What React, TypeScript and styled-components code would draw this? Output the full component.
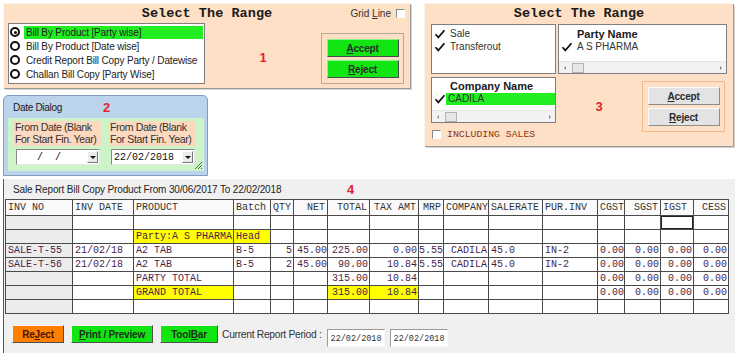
import React from 'react';
import styled, { createGlobalStyle } from 'styled-components';

const GlobalStyle = createGlobalStyle`
  body {
    margin: 0;
    background: #fff;
    font-family: "Liberation Sans", Arial, sans-serif;
  }
`;

const mono = `"Liberation Mono", "Courier New", monospace`;

// ---------- shared bits ----------

const Page = styled.div`
  width: 740px;
  height: 353px;
  overflow: hidden;
  background: #fff;
`;

const Top = styled.div`
  display: flex;
  box-sizing: border-box;
  height: 176px;
  padding: 3px 0 0 3px;
`;

const LeftCol = styled.div`
  display: flex;
  flex-direction: column;
  gap: 7px;
  width: 407px;
`;

const PeachPanel = styled.div<{ $w: number; $h: number }>`
  box-sizing: border-box;
  width: ${p => p.$w}px;
  height: ${p => p.$h}px;
  background: #fde0c6;
  border-top: 1px solid #fff3e8;
  border-left: 1px solid #fff3e8;
  box-shadow: 1px 1px 0 #9a9a9a, 2px 2px 0 #d4d4d4;
  display: flex;
  flex-direction: column;
`;

const TitleRow = styled.div`
  display: grid;
  grid-template-columns: 1fr auto 1fr;
  align-items: center;
  height: 19px;
`;

const Title = styled.div`
  grid-column: 2;
  font-family: ${mono};
  font-weight: bold;
  font-size: 13.5px;
  color: #1a1a1a;
  letter-spacing: 0.05px;
`;

const GridLine = styled.label`
  grid-column: 3;
  justify-self: end;
  display: flex;
  align-items: center;
  gap: 5px;
  margin-right: 5px;
  font-size: 10px;
  color: #333;
`;

const CheckBox = styled.span`
  display: inline-block;
  box-sizing: border-box;
  width: 9px;
  height: 9px;
  background: #fff;
  border: 1px solid;
  border-color: #8a8a8a #fff #fff #8a8a8a;
`;

const Marker = styled.span`
  font-weight: bold;
  font-size: 13px;
  color: #e3232b;
`;

const Box = styled.div<{ $w: number; $h: number }>`
  box-sizing: border-box;
  width: ${p => p.$w}px;
  height: ${p => p.$h}px;
  background: #fff;
  border: 1px solid #7e7e7e;
  font-size: 10px;
  color: #222;
  display: flex;
  flex-direction: column;
  overflow: hidden;
`;

// ---------- panel 1 ----------

const Body1 = styled.div`
  display: flex;
  align-items: flex-end;
  padding-left: 4px;
`;

const RadioRow = styled.div`
  display: flex;
  align-items: center;
  height: 14px;
  padding-left: 1px;
`;

const Radio = styled.span<{ $on?: boolean }>`
  box-sizing: border-box;
  flex: none;
  width: 10px;
  height: 10px;
  border-radius: 50%;
  border: 2px solid #111;
  background: #fff;
  position: relative;
  &::after {
    content: '';
    display: ${p => (p.$on ? 'block' : 'none')};
    position: absolute;
    inset: 1.5px;
    border-radius: 50%;
    background: #111;
  }
`;

const RadioText = styled.span<{ $on?: boolean }>`
  flex: 1;
  margin-left: 4px;
  padding-left: 2px;
  height: 13px;
  line-height: 13px;
  letter-spacing: -0.15px;
  white-space: nowrap;
  background: ${p => (p.$on ? '#22ee22' : 'transparent')};
  margin-right: 1px;
`;

const Center = styled.div<{ $top: number }>`
  flex: 1;
  align-self: stretch;
  display: flex;
  justify-content: center;
  padding-top: ${p => p.$top}px;
`;

const BtnGroup = styled.div<{ $w: number; $h: number; $line: string }>`
  box-sizing: border-box;
  width: ${p => p.$w}px;
  height: ${p => p.$h}px;
  border: 1px solid ${p => p.$line};
  display: flex;
  flex-direction: column;
  align-items: center;
  justify-content: center;
  gap: 3px;
`;

const PanelBtn = styled.button<{ $kind: 'green' | 'gray' }>`
  box-sizing: border-box;
  width: 72px;
  height: 18px;
  padding: 0;
  font-family: "Liberation Sans", Arial, sans-serif;
  font-weight: bold;
  font-size: 10px;
  letter-spacing: -0.2px;
  color: #2a2a2a;
  background: ${p => (p.$kind === 'green' ? '#12e612' : '#e3e3e3')};
  border: 1px solid;
  border-color: ${p =>
    p.$kind === 'green' ? '#8af08a #4a4a4a #4a4a4a #8af08a' : '#fafafa #8c8c8c #8c8c8c #fafafa'};
`;

// ---------- panel 2 ----------

const Dlg = styled.div`
  box-sizing: border-box;
  width: 205px;
  height: 81px;
  background: #bcd3ec;
  border: 1px solid #7f9dc3;
  border-radius: 5px 5px 0 0;
  padding: 0 3px 4px 4px;
  display: flex;
  flex-direction: column;
`;

const DlgTitle = styled.div`
  display: flex;
  align-items: center;
  height: 22px;
  padding-left: 5px;
  font-size: 10px;
  letter-spacing: -0.3px;
  color: #1a1a1a;
`;

const DlgClient = styled.div`
  flex: 1;
  background: #cdf3c9;
  display: flex;
  gap: 8px;
  padding: 3px 0 0 6px;
  position: relative;
`;

const DateField = styled.div`
  display: flex;
  flex-direction: column;
  gap: 3px;
`;

const DateLabel = styled.div`
  width: 86px;
  height: 25px;
  background: #fdd9bf;
  font-size: 10.6px;
  line-height: 12px;
  letter-spacing: -0.4px;
  white-space: nowrap;
  color: #333;
  padding-left: 1px;
`;

const DateInput = styled.div`
  box-sizing: border-box;
  display: flex;
  align-items: center;
  width: 84px;
  height: 16px;
  margin-left: 2px;
  background: #fff;
  border: 1px solid;
  border-color: #8a8a8a #e8e8e8 #e8e8e8 #8a8a8a;
  font-family: ${mono};
  font-size: 10px;
  color: #111;
`;

const DateText = styled.span`
  flex: 1;
  padding-left: 2px;
  white-space: pre;
`;

const DropBtn = styled.span`
  flex: none;
  width: 11px;
  height: 12px;
  margin-right: 1px;
  background: #eaeaea;
  border: 1px solid;
  border-color: #fff #777 #777 #fff;
  box-sizing: border-box;
  display: flex;
  align-items: center;
  justify-content: center;
  &::after {
    content: '';
    border-left: 3px solid transparent;
    border-right: 3px solid transparent;
    border-top: 3px solid #111;
  }
`;

const Grip = styled.svg`
  position: absolute;
  right: 1px;
  bottom: 1px;
`;

// ---------- panel 3 ----------

const Body3 = styled.div`
  display: flex;
  flex-direction: column;
  padding-left: 6px;
`;

const ListRow = styled.div`
  display: flex;
  gap: 2px;
  margin-top: 1px;
`;

const Item = styled.div<{ $bold?: boolean }>`
  display: flex;
  align-items: center;
  height: 13px;
  padding-left: 2px;
  font-size: ${p => (p.$bold ? '11px' : '10px')};
  font-weight: ${p => (p.$bold ? 'bold' : 'normal')};
  color: ${p => (p.$bold ? '#1a1a1a' : '#333')};
  white-space: nowrap;
`;

const Check = styled.svg`
  flex: none;
  width: 12px;
`;

const ItemText = styled.span<{ $hl?: boolean; $gap: number }>`
  flex: 1;
  margin-left: ${p => p.$gap}px;
  padding-left: 2px;
  line-height: 12px;
  background: ${p => (p.$hl ? '#22ee22' : 'transparent')};
`;

const Spacer = styled.span<{ $w: number }>`
  flex: none;
  width: ${p => p.$w}px;
`;

const Scroll = styled.div`
  margin-top: auto;
  height: 11px;
  display: flex;
  align-items: center;
  background: #f2f2f2;
  border-top: 1px solid #e4e4e4;
`;

const Arrow = styled.span<{ $dir: 'l' | 'r' }>`
  width: 11px;
  display: flex;
  justify-content: center;
  &::after {
    content: '';
    border-top: 2px solid transparent;
    border-bottom: 2px solid transparent;
    ${p => (p.$dir === 'l' ? 'border-right: 2px solid #888;' : 'border-left: 2px solid #888;')}
  }
`;

const Thumb = styled.span`
  box-sizing: border-box;
  width: 12px;
  height: 10px;
  margin-left: 2px;
  margin-right: auto;
  background: #e6e6e6;
  border: 1px solid #b4b4b4;
`;

const Bottom3 = styled.div`
  display: flex;
  align-items: flex-start;
  margin-top: 3px;
`;

const Col3 = styled.div`
  display: flex;
  flex-direction: column;
`;

const IncRow = styled.label`
  display: flex;
  align-items: center;
  gap: 6px;
  margin-top: 6px;
  padding-left: 1px;
  font-family: ${mono};
  font-size: 9.8px;
  color: #8b3514;
`;

const Grp3 = styled.div`
  margin-top: 4px;
  margin-right: 8px;
`;

// ---------- section 4 ----------

const Report = styled.div`
  box-sizing: border-box;
  margin: 3px 0 0 3px;
  width: 732px;
  height: 174px;
  background: #f0f0f0;
  border-left: 1px solid #5a5a5a;
`;

const Caption = styled.div`
  display: flex;
  align-items: center;
  height: 20px;
  padding-left: 9px;
  font-size: 10px;
  letter-spacing: -0.15px;
  color: #1e1e1e;
`;

const CaptionText = styled.span`
  width: 334px;
  padding-top: 1px;
`;

const Grid = styled.table`
  margin-left: 1px;
  border-collapse: collapse;
  table-layout: fixed;
  width: 723px;
  font-family: ${mono};
  font-size: 10px;
`;

const Th = styled.th<{ $a: string }>`
  height: 15px;
  padding: 0 2px;
  border: 1px solid #4a4a4a;
  background: #fafafa;
  font-weight: normal;
  color: #333;
  text-align: ${p => p.$a};
  white-space: nowrap;
  overflow: hidden;
`;

const Td = styled.td<{ $a: string; $hl?: boolean; $fixed?: boolean; $focus?: boolean; $tight?: boolean }>`
  height: 13px;
  padding: ${p => (p.$tight ? '0' : '0 1px 0 2px')};
  border: 1px solid #4a4a4a;
  background: ${p => (p.$hl ? '#ffff00' : p.$fixed ? '#ececec' : '#fff')};
  color: #4a1f4a;
  text-align: ${p => p.$a};
  white-space: nowrap;
  overflow: hidden;
  line-height: 13px;
  box-shadow: ${p => (p.$focus ? 'inset 0 0 0 1px #222' : 'none')};
`;

const BottomBar = styled.div`
  display: flex;
  align-items: flex-start;
  margin-top: 11px;
  padding-left: 8px;
`;

const BarBtn = styled.button<{ $w: number; $orange?: boolean }>`
  box-sizing: border-box;
  width: ${p => p.$w}px;
  height: 18px;
  margin-right: 7px;
  padding: 0;
  font-family: "Liberation Sans", Arial, sans-serif;
  font-weight: bold;
  font-size: 10px;
  letter-spacing: -0.2px;
  color: ${p => (p.$orange ? '#4a1400' : '#1c2e1c')};
  background: ${p => (p.$orange ? '#ff8000' : '#12e612')};
  border: 1px solid;
  border-color: #f4f4f4 #505050 #505050 #f4f4f4;
`;

const PeriodLabel = styled.span`
  margin: 2px 0 0 -3px;
  font-size: 10.3px;
  letter-spacing: -0.3px;
  color: #333;
  line-height: 16px;
`;

const PeriodInput = styled.div`
  box-sizing: border-box;
  width: 58px;
  height: 18px;
  margin: 4px 0 0 5px;
  padding: 4px 0 0 3px;
  background: #fff;
  border: 1px solid;
  border-color: #9a9a9a #f8f8f8 #f8f8f8 #9a9a9a;
  font-family: ${mono};
  font-size: 8.5px;
  color: #333;
`;

// ---------- data ----------

type Col = { h: string; w: number; ha: string; a: string; tight?: boolean };

const cols: Col[] = [
  { h: 'INV NO', w: 67, ha: 'left', a: 'left' },
  { h: 'INV DATE', w: 61, ha: 'left', a: 'left' },
  { h: 'PRODUCT', w: 100, ha: 'left', a: 'left' },
  { h: 'Batch', w: 37, ha: 'left', a: 'left' },
  { h: 'QTY', w: 23, ha: 'left', a: 'right' },
  { h: 'NET', w: 34, ha: 'right', a: 'right', tight: true },
  { h: 'TOTAL', w: 42, ha: 'right', a: 'right' },
  { h: 'TAX AMT', w: 49, ha: 'right', a: 'right' },
  { h: 'MRP', w: 25, ha: 'right', a: 'left', tight: true },
  { h: 'COMPANY', w: 45, ha: 'left', a: 'right' },
  { h: 'SALERATE', w: 54, ha: 'left', a: 'left' },
  { h: 'PUR.INV', w: 55, ha: 'left', a: 'left' },
  { h: 'CGST', w: 27, ha: 'left', a: 'right', tight: true },
  { h: 'SGST', w: 36, ha: 'right', a: 'right' },
  { h: 'IGST', w: 33, ha: 'left', a: 'right' },
  { h: 'CESS', w: 35, ha: 'right', a: 'right' },
];

const z4 = ['0.00', '0.00', '0.00', '0.00'];
const blank = Array(16).fill('');

const rows: { cells: string[]; hl?: number[] }[] = [
  { cells: blank },
  { cells: ['', '', 'Party:A S PHARMA', 'Head', ...Array(12).fill('')], hl: [2, 3] },
  { cells: ['SALE-T-55', '21/02/18', 'A2 TAB', 'B-5', '5', '45.00', '225.00', '0.00', '5.55', 'CADILA', '45.0', 'IN-2', ...z4] },
  { cells: ['SALE-T-56', '21/02/18', 'A2 TAB', 'B-5', '2', '45.00', '90.00', '10.84', '5.55', 'CADILA', '45.0', 'IN-2', ...z4] },
  { cells: ['', '', 'PARTY TOTAL', '', '', '', '315.00', '10.84', '', '', '', '', ...z4] },
  { cells: ['', '', 'GRAND TOTAL', '', '', '', '315.00', '10.84', '', '', '', '', ...z4], hl: [2, 6, 7] },
  { cells: blank },
];

const radios = [
  'Bill By Product [Party wise]',
  'Bill By Product [Date wise]',
  'Credit Report Bill Copy Party / Datewise',
  'Challan Bill Copy [Party Wise]',
];

const Tick = () => (
  <Check viewBox="0 0 12 10" height="10">
    <path d="M1.5 5.2 L4.3 8.4 L10.5 1.2" fill="none" stroke="#111" strokeWidth="1.7" />
  </Check>
);

const ScrollBar = () => (
  <Scroll>
    <Arrow $dir="l" />
    <Thumb />
    <Arrow $dir="r" />
  </Scroll>
);

const App = () => {
  return (
    <Page>
      <GlobalStyle />
      <Top>
        <LeftCol>
          <PeachPanel $w={407} $h={85}>
            <TitleRow>
              <Title>Select The Range</Title>
              <GridLine>
                <span>
                  Grid <u>L</u>ine
                </span>
                <CheckBox />
              </GridLine>
            </TitleRow>
            <Body1>
              <Box $w={197} $h={61}>
                <Spacer $w={1} style={{ height: 1 }} />
                {radios.map((r, i) => (
                  <RadioRow key={r}>
                    <Radio $on={i === 0} />
                    <RadioText $on={i === 0}>{r}</RadioText>
                  </RadioRow>
                ))}
              </Box>
              <Center $top={27}>
                <Marker>1</Marker>
              </Center>
              <BtnGroup $w={83} $h={51} $line="#b8a898" style={{ marginRight: 6 }}>
                <PanelBtn $kind="green">
                  <u>A</u>ccept
                </PanelBtn>
                <PanelBtn $kind="green">
                  <u>R</u>eject
                </PanelBtn>
              </BtnGroup>
            </Body1>
          </PeachPanel>

          <Dlg>
            <DlgTitle>
              <Spacer $w={90}>Date Dialog</Spacer>
              <Marker>2</Marker>
            </DlgTitle>
            <DlgClient>
              <DateField>
                <DateLabel>
                  From Date (Blank
                  <br />
                  For Start Fin. Year)
                </DateLabel>
                <DateInput>
                  <DateText>{'   /  /'}</DateText>
                  <DropBtn />
                </DateInput>
              </DateField>
              <DateField>
                <DateLabel>
                  From Date (Blank
                  <br />
                  For Start Fin. Year)
                </DateLabel>
                <DateInput>
                  <DateText>22/02/2018</DateText>
                  <DropBtn />
                </DateInput>
              </DateField>
              <Grip width="10" height="10" viewBox="0 0 10 10">
                <path d="M9 2 L2 9 M9 5 L5 9 M9 8 L8 9" stroke="#3a7a3a" strokeWidth="1" />
              </Grip>
            </DlgClient>
          </Dlg>
        </LeftCol>

        <PeachPanel $w={309} $h={143} style={{ marginLeft: 14 }}>
          <TitleRow>
            <Title>Select The Range</Title>
          </TitleRow>
          <Body3>
            <ListRow>
              <Box $w={125} $h={50}>
                <Spacer $w={1} style={{ height: 2 }} />
                <Item>
                  <Tick />
                  <ItemText $gap={2}>Sale</ItemText>
                </Item>
                <Item>
                  <Tick />
                  <ItemText $gap={2}>Transferout</ItemText>
                </Item>
              </Box>
              <Box $w={169} $h={50}>
                <Spacer $w={1} style={{ height: 2 }} />
                <Item $bold>
                  <Spacer $w={16} />
                  <span>Party Name</span>
                </Item>
                <Item>
                  <Tick />
                  <ItemText $gap={2}>A S PHARMA</ItemText>
                </Item>
                <ScrollBar />
              </Box>
            </ListRow>
            <Bottom3>
              <Col3>
                <Box $w={125} $h={46}>
                  <Spacer $w={1} style={{ height: 1 }} />
                  <Item $bold>
                    <Spacer $w={16} />
                    <span>Company Name</span>
                  </Item>
                  <Item>
                    <Tick />
                    <ItemText $hl $gap={0}>CADILA</ItemText>
                  </Item>
                  <ScrollBar />
                </Box>
                <IncRow>
                  <CheckBox />
                  INCLUDING SALES
                </IncRow>
              </Col3>
              <Center $top={22}>
                <Marker>3</Marker>
              </Center>
              <Grp3>
                <BtnGroup $w={83} $h={51} $line="#f2b98c">
                  <PanelBtn $kind="gray">
                    <u>A</u>ccept
                  </PanelBtn>
                  <PanelBtn $kind="gray">
                    <u>R</u>eject
                  </PanelBtn>
                </BtnGroup>
              </Grp3>
            </Bottom3>
          </Body3>
        </PeachPanel>
      </Top>

      <Report>
        <Caption>
          <CaptionText>Sale Report Bill Copy Product From 30/06/2017 To 22/02/2018</CaptionText>
          <Marker>4</Marker>
        </Caption>
        <Grid>
          <colgroup>
            {cols.map(c => (
              <col key={c.h} style={{ width: c.w }} />
            ))}
          </colgroup>
          <thead>
            <tr>
              {cols.map(c => (
                <Th key={c.h} $a={c.ha}>
                  {c.h}
                </Th>
              ))}
            </tr>
          </thead>
          <tbody>
            {rows.map((r, ri) => (
              <tr key={ri}>
                {r.cells.map((v, ci) => (
                  <Td
                    key={ci}
                    $a={cols[ci].a}
                    $tight={cols[ci].tight}
                    $fixed={ci === 0}
                    $hl={r.hl?.includes(ci)}
                    $focus={ri === 0 && ci === 14}
                  >
                    {v}
                  </Td>
                ))}
              </tr>
            ))}
          </tbody>
        </Grid>
        <BottomBar>
          <BarBtn $w={52} $orange>
            Re<u>J</u>ect
          </BarBtn>
          <BarBtn $w={82}>
            <u>P</u>rint / Preview
          </BarBtn>
          <BarBtn $w={58}>
            Tool<u>B</u>ar
          </BarBtn>
          <PeriodLabel>Current Report Period :</PeriodLabel>
          <PeriodInput>22/02/2018</PeriodInput>
          <PeriodInput>22/02/2018</PeriodInput>
        </BottomBar>
      </Report>
    </Page>
  );
};

export default App;
